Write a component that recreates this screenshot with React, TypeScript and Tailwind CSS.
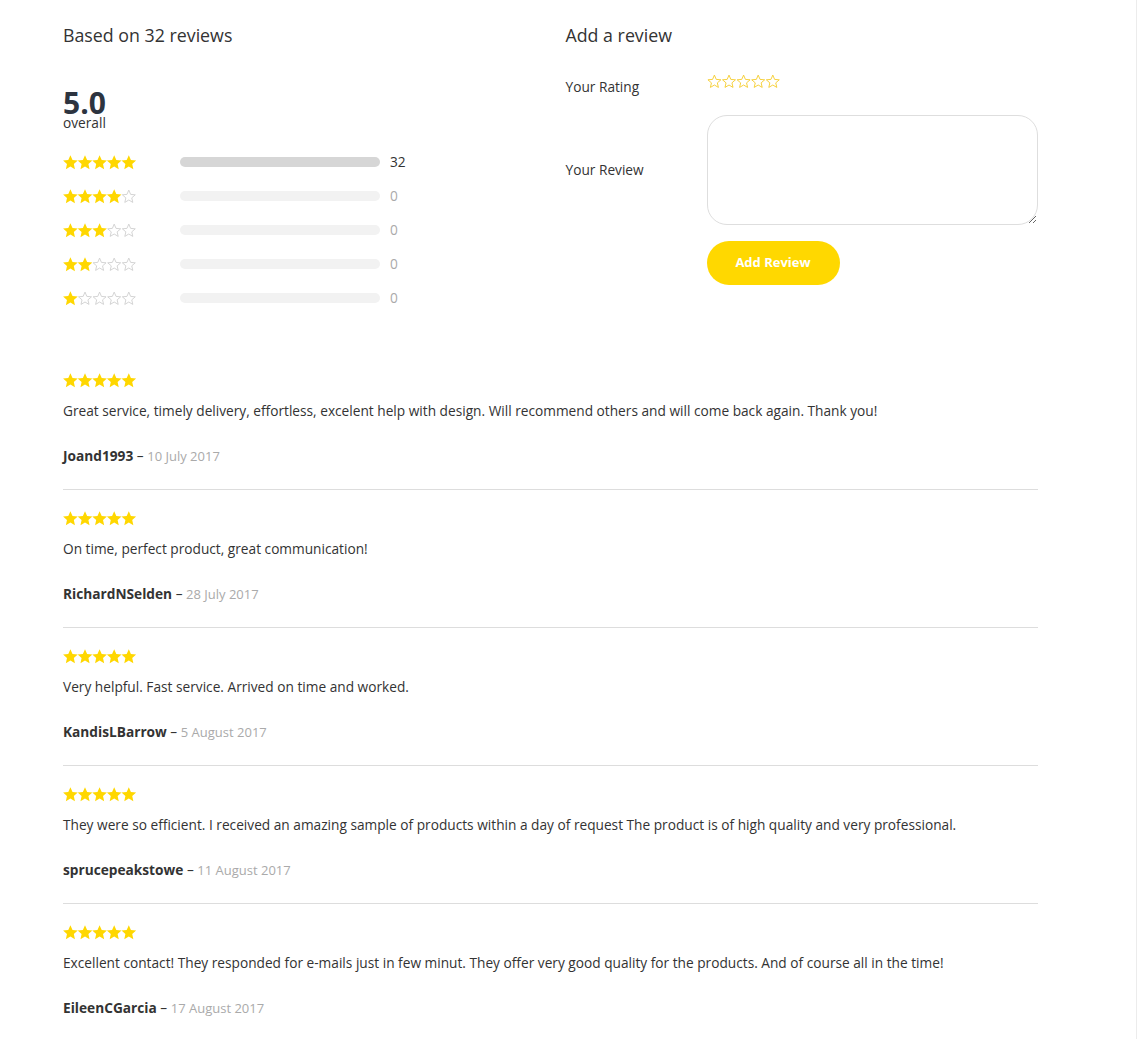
import React from "react";

const GOLD = "#ffd700";

function starPoints(cx: number, cy: number, R: number, r: number) {
  return Array.from({ length: 10 }, (_, i) => {
    const a = -Math.PI / 2 + (i * Math.PI) / 5;
    const rad = i % 2 === 0 ? R : r;
    return `${(cx + rad * Math.cos(a)).toFixed(2)},${(cy + rad * Math.sin(a)).toFixed(2)}`;
  }).join(" ");
}

function Stars({ filled, emptyColor = "#cfcfcf" }: { filled: number; emptyColor?: string }) {
  return (
    <svg width="74" height="15" viewBox="0 0 74 15" className="block">
      {[0, 1, 2, 3, 4].map((i) => {
        const cx = 7.4 + i * 14.6;
        return i < filled ? (
          <polygon key={i} points={starPoints(cx, 7.9, 7.7, 3.6)} fill={GOLD} />
        ) : (
          <polygon
            key={i}
            points={starPoints(cx, 7.9, 6.8, 3.1)}
            fill="none"
            stroke={emptyColor}
            strokeWidth="0.9"
            strokeLinejoin="round"
          />
        );
      })}
    </svg>
  );
}

const breakdown = [
  { stars: 5, count: 32 },
  { stars: 4, count: 0 },
  { stars: 3, count: 0 },
  { stars: 2, count: 0 },
  { stars: 1, count: 0 },
];

const reviews = [
  {
    text: "Great service, timely delivery, effortless, excelent help with design. Will recommend others and will come back again. Thank you!",
    author: "Joand1993",
    date: "10 July 2017",
  },
  {
    text: "On time, perfect product, great communication!",
    author: "RichardNSelden",
    date: "28 July 2017",
  },
  {
    text: "Very helpful. Fast service. Arrived on time and worked.",
    author: "KandisLBarrow",
    date: "5 August 2017",
  },
  {
    text: "They were so efficient. I received an amazing sample of products within a day of request The product is of high quality and very professional.",
    author: "sprucepeakstowe",
    date: "11 August 2017",
  },
  {
    text: "Excellent contact! They responded for e-mails just in few minut. They offer very good quality for the products. And of course all in the time!",
    author: "EileenCGarcia",
    date: "17 August 2017",
  },
];

export default function App() {
  return (
    <div className="min-h-screen bg-white border-r border-[#ececec] font-['Open_Sans',sans-serif] text-[#333]">
      <div className="pl-[63px] pt-[22px]">
        <div className="w-[975px]">
          {/* summary + form */}
          <div className="grid grid-cols-2 gap-[30px]">
            <div>
              <h3 className="text-[17.8px] leading-[26px]">Based on 32 reviews</h3>
              <div className="mt-[42px] text-[30px] leading-[26px] font-bold text-[#2d3440]">5.0</div>
              <div className="text-[13.7px] leading-[14px]">overall</div>
              <div className="mt-[15px]">
                {breakdown.map((b) => (
                  <div key={b.stars} className="flex items-center h-[34px]">
                    <div className="w-[117px]">
                      <Stars filled={b.stars} />
                    </div>
                    <div
                      className={`w-[200px] h-[10px] rounded-full ${b.count > 0 ? "bg-[#d6d6d6]" : "bg-[#f2f2f2]"}`}
                    />
                    <span className={`ml-[10px] text-[13.7px] ${b.count > 0 ? "text-[#333]" : "text-[#aaa]"}`}>
                      {b.count}
                    </span>
                  </div>
                ))}
              </div>
            </div>

            <div>
              <h3 className="text-[17.8px] leading-[26px]">Add a review</h3>
              <div className="mt-[26px] grid grid-cols-[141px_1fr]">
                <div className="text-[13.7px] leading-[26px]">Your Rating</div>
                <div>
                  <Stars filled={0} emptyColor="#f5cc2a" />
                </div>
                <div className="mt-[15px] flex items-center text-[13.7px]">Your Review</div>
                <textarea className="mt-[15px] h-[110px] w-full rounded-[20px] border border-[#dedede] outline-none" />
                <div />
                <div className="mt-[16px]">
                  <button className="w-[133px] h-[44px] rounded-full bg-[#ffd800] text-white text-[13px] font-bold">
                    Add Review
                  </button>
                </div>
              </div>
            </div>
          </div>

          {/* reviews */}
          <div className="mt-[37px]">
            {reviews.map((r) => (
              <div key={r.author} className="pt-[21px] pb-[21px] border-b border-[#dddddd]">
                <Stars filled={5} />
                <p className="mt-[11px] text-[13.7px] leading-[24px]">{r.text}</p>
                <div className="mt-[21px] text-[13.7px] leading-[24px]">
                  <span className="font-bold">{r.author}</span>
                  <span> – </span>
                  <span className="text-[13px] text-[#aaa]">{r.date}</span>
                </div>
              </div>
            ))}
          </div>
        </div>
      </div>
    </div>
  );
}
